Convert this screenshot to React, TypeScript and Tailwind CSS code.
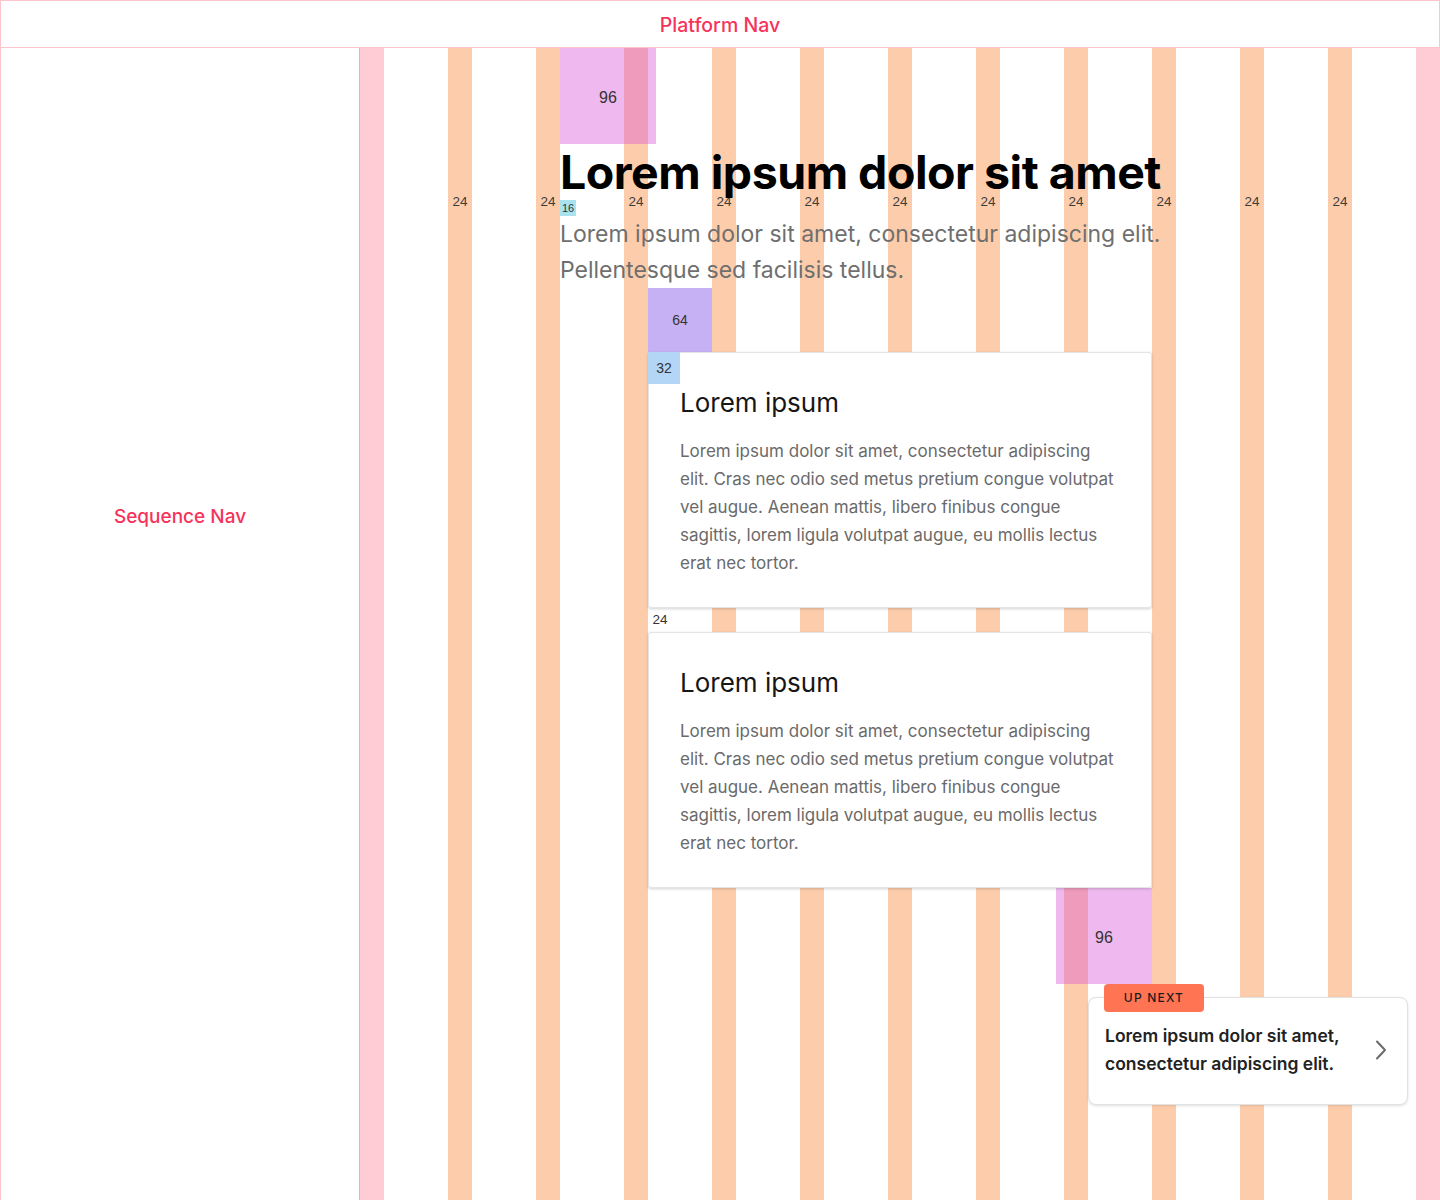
const columns = Array.from({ length: 12 });

const bodyLines = [
  "Lorem ipsum dolor sit amet, consectetur adipiscing",
  "elit. Cras nec odio sed metus pretium congue volutpat",
  "vel augue. Aenean mattis, libero finibus congue",
  "sagittis, lorem ligula volutpat augue, eu mollis lectus",
  "erat nec tortor.",
];

function GridOverlay() {
  return (
    <div className="absolute inset-0 flex">
      <div className="w-6 bg-[#ffccd6]" />
      {columns.map((_, i) => (
        <div key={i} className="flex">
          <div className="w-16" />
          {i < 11 && (
            <div className="w-6 bg-[#fdcdab] flex justify-center pt-[146px]">
              <span className="h-4 text-[13.5px] leading-4 text-[#3c3c3c] font-['Liberation_Sans',Arial,sans-serif]">
                24
              </span>
            </div>
          )}
        </div>
      ))}
      <div className="w-6 bg-[#ffccd6]" />
    </div>
  );
}

function Card({ marker = false }: { marker?: boolean }) {
  return (
    <div className="relative w-[504px] bg-white border border-[#e4e4e4] rounded-[3px] shadow-[0_1px_3px_rgba(0,0,0,0.18)] px-[31px] pt-8 pb-[30px]">
      {/* 32 spacer marker */}
      {marker && (
        <div className="absolute -left-px -top-px w-8 h-8 bg-[#b3d6f7] flex items-center justify-center text-[14px] text-[#333] font-['Liberation_Sans',Arial,sans-serif]">
          32
        </div>
      )}
      <h2 className="text-[26px] leading-9 text-[#161616] font-normal">Lorem ipsum</h2>
      <p className="mt-4 text-[17px] leading-7 text-[#6a6a6a] whitespace-nowrap">
        {bodyLines.map((line, i) => (
          <span key={i} className="block">
            {line}
          </span>
        ))}
      </p>
    </div>
  );
}

export default function App() {
  return (
    <div className="w-[1440px] min-h-[1200px] bg-white font-['Inter','Noto_Sans',sans-serif]">
      {/* Platform Nav */}
      <header className="h-12 pt-1 border border-[#ffc5cf] flex items-center justify-center">
        <span className="text-[19.5px] font-medium text-[#f5335b]">Platform Nav</span>
      </header>

      <div className="flex">
        {/* Sequence Nav */}
        <aside className="w-[360px] h-[1152px] border-l border-l-[#ffc5cf] border-r border-r-[#ffa6b7]">
          <div className="h-[938px] flex items-center justify-center">
            <span className="text-[19px] font-medium text-[#f5335b]">Sequence Nav</span>
          </div>
        </aside>

        {/* Content with grid overlay */}
        <main className="relative flex-1 h-[1152px]">
          <GridOverlay />

          <div className="relative pl-[200px] flex flex-col">
            <div className="w-24 h-24 pt-1 bg-[rgba(215,80,215,0.4)] flex items-center justify-center text-[16px] text-[#333] font-['Liberation_Sans',Arial,sans-serif]">
              96
            </div>

            <h1 className="text-[46.5px] leading-[56px] font-bold text-black whitespace-nowrap tracking-[-0.5px]">
              Lorem ipsum dolor sit amet
            </h1>

            <div className="w-4 h-4 bg-[#a9e3ef] flex items-center justify-center text-[11px] text-[#333] font-['Liberation_Sans',Arial,sans-serif]">
              16
            </div>

            <p className="text-[23px] leading-9 text-[#6f6f6f] whitespace-nowrap">
              Lorem ipsum dolor sit amet, consectetur adipiscing elit.
              <br />
              Pellentesque sed facilisis tellus.
            </p>

            <div className="ml-[88px] flex flex-col">
              <div className="w-16 h-16 bg-[#c7b1f5] flex items-center justify-center text-[14px] text-[#333] font-['Liberation_Sans',Arial,sans-serif]">
                64
              </div>
              <Card marker />
              <div className="h-6 w-6 flex items-center justify-center text-[13.5px] text-[#333] font-['Liberation_Sans',Arial,sans-serif]">
                24
              </div>
              <Card />
              <div className="w-[504px] flex justify-end">
                <div className="w-24 h-24 pt-1 bg-[rgba(215,80,215,0.4)] flex items-center justify-center text-[16px] text-[#333] font-['Liberation_Sans',Arial,sans-serif]">
                  96
                </div>
              </div>
            </div>

            {/* Up next */}
            <div className="ml-[528px] relative w-[320px] pt-[13px]">
              <div className="bg-white border border-[#e2e2e2] rounded-lg shadow-[0_1px_3px_rgba(0,0,0,0.12)] pl-4 pr-5 pt-[24px] pb-[26px] flex items-center justify-between">
                <p className="text-[17.5px] leading-7 font-semibold text-[#222] whitespace-nowrap">
                  Lorem ipsum dolor sit amet,
                  <br />
                  consectetur adipiscing elit.
                </p>
                <svg width="12" height="20" viewBox="0 0 12 20" fill="none" className="text-[#6b6b6b]">
                  <path d="M2 1.5 L10 10 L2 18.5" stroke="currentColor" strokeWidth="2" strokeLinecap="round" strokeLinejoin="round" />
                </svg>
              </div>
              <div className="absolute top-0 left-4 w-[100px] h-7 rounded bg-[#ff7452] flex items-center justify-center text-[12px] font-medium tracking-[0.1em] text-[#1b1b1b]">
                UP NEXT
              </div>
            </div>
          </div>
        </main>
      </div>
    </div>
  );
}
